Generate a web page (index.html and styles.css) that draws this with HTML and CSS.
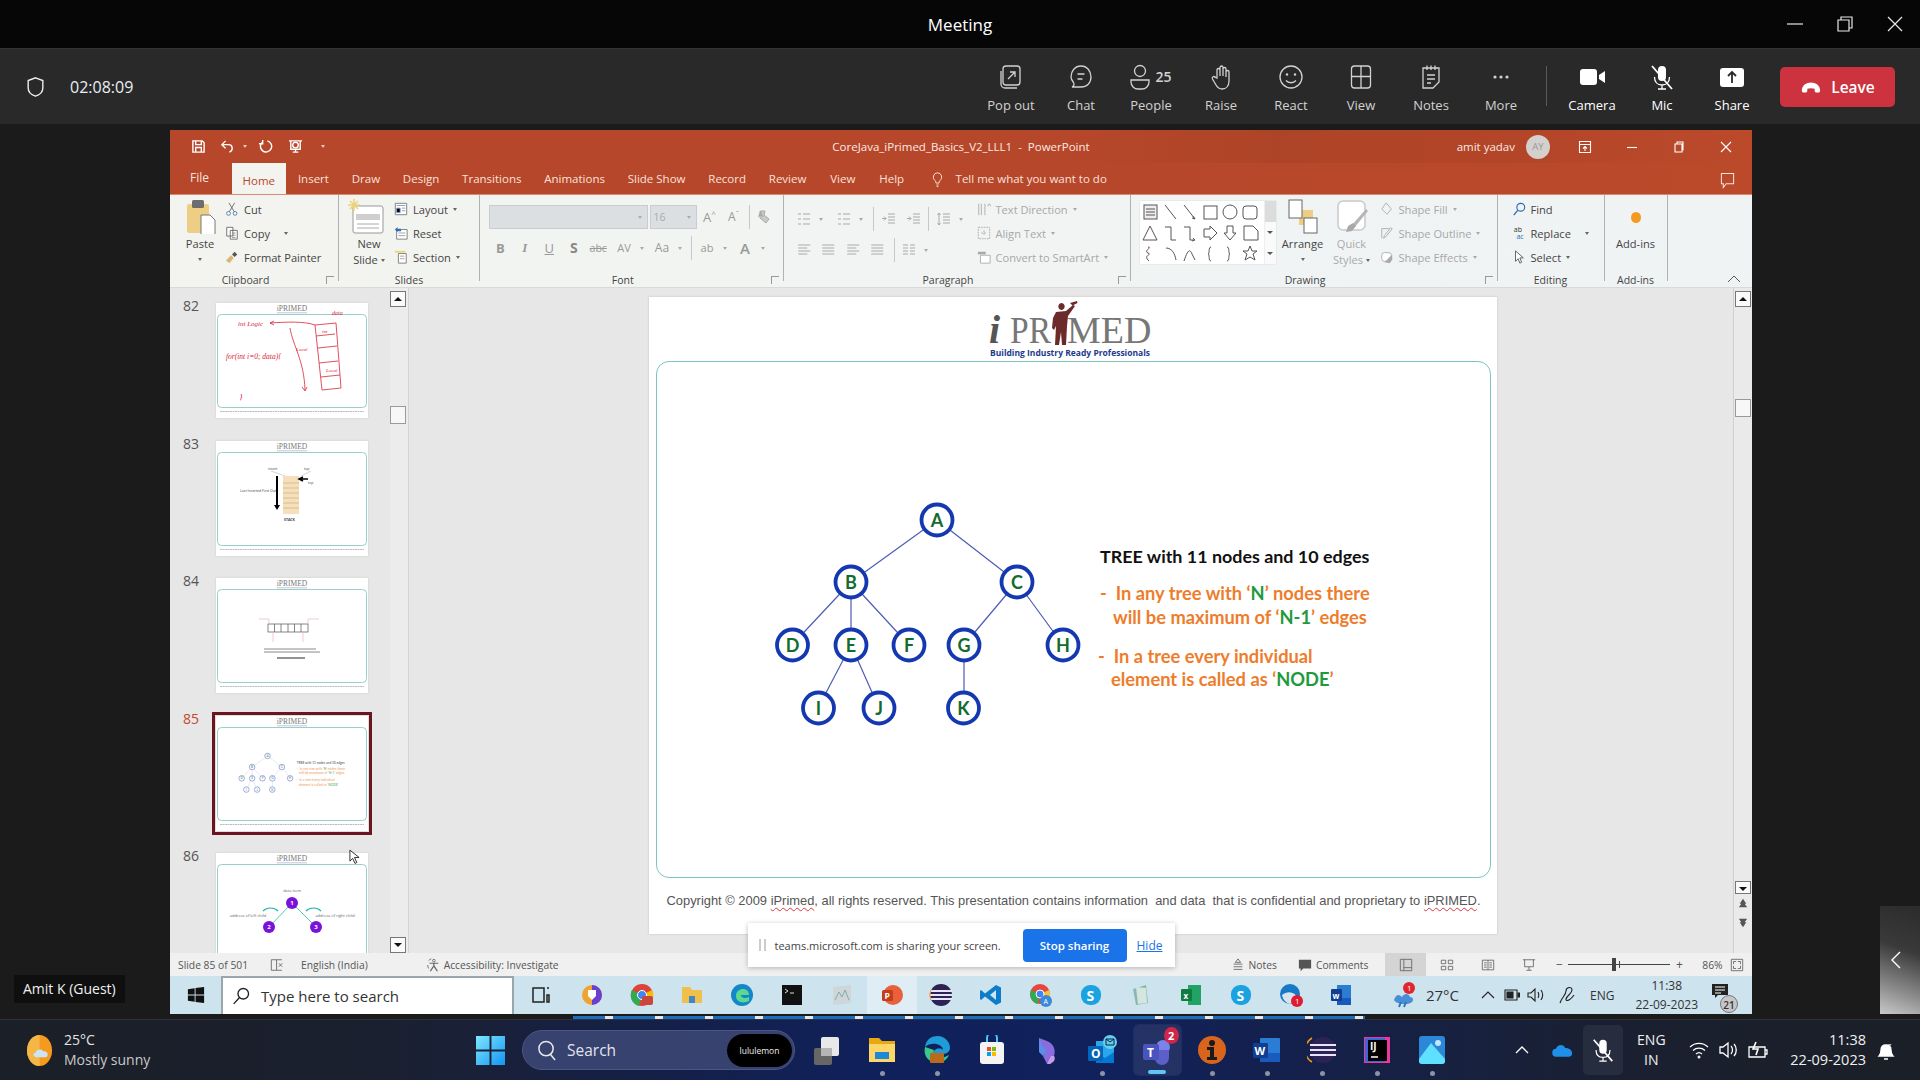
FILE: index.html
```html
<!DOCTYPE html>
<html lang="en">
<head>
<meta charset="utf-8">
<title>Meeting</title>
<link rel="stylesheet" href="styles.css">
</head>
<body>
<svg class="sprite" xmlns="http://www.w3.org/2000/svg">
  <defs>
    <symbol id="t-popout" viewBox="0 0 28 28"><rect x="6" y="3" width="17" height="19" rx="3"/><path d="M4 8v13a4 4 0 0 0 4 4h12"/><path d="M11 16l7-7M13 9h5v5"/></symbol>
    <symbol id="t-chat" viewBox="0 0 28 28"><path d="M14 3c6 0 10 5 10 11s-4 10-10 10h-9c2-1 2.500-3 1.500-4.500C5 17.500 4 16 4 14 4 8 8 3 14 3z"/><path d="M10.500 11h7M10.500 16h5"/></symbol>
    <symbol id="t-people" viewBox="0 0 28 28"><circle cx="14" cy="8" r="5.500"/><path d="M5 17h18v2a7 7 0 0 1-7 7h-4a7 7 0 0 1-7-7z"/></symbol>
    <symbol id="t-hand" viewBox="0 0 28 28"><path d="M10 15V7a1.500 1.500 0 0 1 3 0v6V4.500a1.500 1.500 0 0 1 3 0V13V6a1.500 1.500 0 0 1 3 0v8V9a1.500 1.500 0 0 1 3 0v9c0 5-3 8-7 8-3 0-4.500-1.500-6-4l-3.500-6c-1-2 1.500-3.500 3-1.500z"/></symbol>
    <symbol id="t-smile" viewBox="0 0 28 28"><circle cx="14" cy="14" r="11"/><circle cx="10" cy="11.500" r="1.200" class="fill"/><circle cx="18" cy="11.500" r="1.200" class="fill"/><path d="M9 17.500c2.500 3 7.500 3 10 0"/></symbol>
    <symbol id="t-view" viewBox="0 0 28 28"><rect x="4.500" y="3" width="19" height="22" rx="3"/><path d="M14 3v22M4.500 13.500h19"/></symbol>
    <symbol id="t-notes" viewBox="0 0 28 28"><path d="M6 5h16v14l-6 6H6z"/><path d="M10 2.500V7M14 2.500V7M18 2.500V7M10 12h8M10 16h8M10 20h4"/></symbol>
    <symbol id="t-mic" viewBox="0 0 28 28"><rect x="10" y="3" width="8" height="15" rx="4" class="fill"/><path d="M6.500 14c0 5 3 8 7.500 8s7.500-3 7.500-8M14 22v4M10 26h8"/><path d="M4 3l20 23" stroke-width="1.800"/></symbol>
    <symbol id="rib-lines" viewBox="0 0 16 16"><path d="M2 3h3M7 3h7M2 8h3M7 8h7M2 13h3M7 13h7"/></symbol>
    <symbol id="rib-indent" viewBox="0 0 16 16"><path d="M7 3h7M7 6h7M7 9h7M7 12h7M5 7.500H1m2-2 2 2-2 2"/></symbol>
    <symbol id="rib-align" viewBox="0 0 16 16"><path d="M2 3h12M2 6h9M2 9h12M2 12h9"/></symbol>
    <symbol id="rib-just" viewBox="0 0 16 16"><path d="M2 3h12M2 6h12M2 9h12M2 12h12"/></symbol>
    <symbol id="rib-cols" viewBox="0 0 16 16"><path d="M2 3h5M9 3h5M2 6h5M9 6h5M2 9h5M9 9h5M2 12h5M9 12h5"/></symbol>
    <symbol id="rib-space" viewBox="0 0 16 16"><path d="M7 3h7M7 6h7M7 9h7M7 12h7M3 2v12M1.500 4 3 2l1.500 2M1.500 12 3 14l1.500-2"/></symbol>
    <g id="thumb-frame">
      <rect x="1.500" y="11.500" width="149" height="93" rx="4" fill="#fff" stroke="#7cc4bd" stroke-width=".8"/>
      <text x="76" y="8" text-anchor="middle" font-family="Liberation Serif" font-size="7.500" fill="#777">iPRIMED</text>
      <path d="M61 9.800h30" stroke="#7d8cc0" stroke-width=".5"/>
      <path d="M4 108.500h144" stroke="#b5b5b5" stroke-width=".9" stroke-dasharray="2 .5"/>
    </g>
  </defs>
</svg>

<div class="app">
  <header class="titlebar">
    <div></div>
    <div class="title">Meeting</div>
    <div class="winctl">
      <svg class="wc" viewBox="0 0 16 16"><path d="M0 8h16"/></svg>
      <svg class="wc" viewBox="0 0 16 16"><path d="M1 4h11v11H1zM4 4V1h11v11h-3"/></svg>
      <svg class="wc" viewBox="0 0 16 16"><path d="M1 1l14 14M15 1L1 15"/></svg>
    </div>
  </header>

  <section class="toolbar">
    <div class="call-info">
      <svg class="shield" viewBox="0 0 20 24"><path d="M10 2l8 3v8c0 4.500-3.500 7.500-8 9-4.500-1.500-8-4.500-8-9V5z"/></svg>
      <span class="timer">02:08:09</span>
    </div>
    <div class="actions">
      <div class="act"><svg class="ti"><use href="#t-popout"/></svg><span>Pop out</span></div>
      <div class="act"><svg class="ti"><use href="#t-chat"/></svg><span>Chat</span></div>
      <div class="act"><div class="ppl"><svg class="ti"><use href="#t-people"/></svg><b>25</b></div><span>People</span></div>
      <div class="act"><svg class="ti"><use href="#t-hand"/></svg><span>Raise</span></div>
      <div class="act"><svg class="ti"><use href="#t-smile"/></svg><span>React</span></div>
      <div class="act"><svg class="ti"><use href="#t-view"/></svg><span>View</span></div>
      <div class="act"><svg class="ti"><use href="#t-notes"/></svg><span>Notes</span></div>
      <div class="act"><svg class="ti" viewBox="0 0 28 28"><circle cx="8" cy="14" r="1.600" class="fill"/><circle cx="14" cy="14" r="1.600" class="fill"/><circle cx="20" cy="14" r="1.600" class="fill"/></svg><span>More</span></div>
      <div class="divider"></div>
      <div class="act bright"><svg class="ti" viewBox="0 0 28 28"><rect x="2" y="6" width="17" height="16" rx="3" class="fill"/><path d="M21 12l6-4v12l-6-4z" class="fill"/></svg><span>Camera</span></div>
      <div class="act bright"><svg class="ti"><use href="#t-mic"/></svg><span>Mic</span></div>
      <div class="act bright"><svg class="ti" viewBox="0 0 28 28"><rect x="2" y="5" width="24" height="19" rx="3" class="fill"/><path d="M14 20V9M10 13l4-4 4 4" class="cut"/></svg><span>Share</span></div>
      <div class="leave"><svg viewBox="0 0 24 24"><path d="M2 16c0-6 5-9 10-9s10 3 10 9c0 1-1 2-2 2h-2c-1 0-2-1-2-2v-2c-2-1-6-1-8 0v2c0 1-1 2-2 2H4c-1 0-2-1-2-2z"/></svg><span>Leave</span></div>
    </div>
  </section>

  <main class="stage">
    <div class="ppt">
      <div class="ppt-title">
        <div class="qat">
          <svg class="q q-save" viewBox="0 0 16 16"><path d="M2 2h10l2 2v10H2zM5 2v4h6V2M5 14v-5h6v5"/></svg>
          <svg class="q q-undo" viewBox="0 0 16 16"><path d="M6 2L2 6l4 4M2 6h7c3 0 4 2 4 4s-1 3-3 4"/></svg>
          <i class="ch lt"></i>
          <svg class="q q-redo" viewBox="0 0 16 16"><path d="M10 2a6 6 0 1 1-5 1M5 1v4H1"/></svg>
          <svg class="q q-show" viewBox="0 0 16 16"><path d="M1 2h14M3 2v9h10V2M8 11v3M5 14h6"/><circle cx="8" cy="6.500" r="3"/></svg>
          <i class="ch lt qd"></i>
        </div>
        <div class="doc-title">CoreJava_iPrimed_Basics_V2_LLL1&nbsp; - &nbsp;PowerPoint</div>
        <div class="ppt-user">
          <span class="uname">amit yadav</span>
          <span class="avatar">AY</span>
          <svg class="pc pc-a" viewBox="0 0 14 14"><path d="M1.500 1.500h11v11h-11zM1.500 4.500h11M7 11V6.500M5 8.500l2-2 2 2"/></svg>
          <svg class="pc pc-b" viewBox="0 0 14 14"><path d="M2 7.500h10"/></svg>
          <svg class="pc pc-c" viewBox="0 0 14 14"><path d="M3 4h7v8H3zM5 4V2h6v8h-1"/></svg>
          <svg class="pc pc-d" viewBox="0 0 14 14"><path d="M2 2l10 10M12 2L2 12"/></svg>
        </div>
      </div>
      <nav class="tabs">
        <span class="tab tab-file">File</span>
        <span class="tab tab-home">Home</span>
        <span class="tab">Insert</span>
        <span class="tab">Draw</span>
        <span class="tab">Design</span>
        <span class="tab">Transitions</span>
        <span class="tab">Animations</span>
        <span class="tab">Slide Show</span>
        <span class="tab">Record</span>
        <span class="tab">Review</span>
        <span class="tab tab-wide">View</span>
        <span class="tab tab-wide">Help</span>
        <svg class="bulb" viewBox="0 0 14 20"><path d="M7 1.500a5.500 5.500 0 0 0-3 10c.8.700 1 2 1 3h4c0-1 .2-2.300 1-3a5.500 5.500 0 0 0-3-10zM5.500 17h3M6 19h2"/></svg>
        <span class="tell">Tell me what you want to do</span>
        <svg class="comment" viewBox="0 0 16 18"><path d="M1.500 1.500h13v11h-8l-3 4v-4h-2z"/></svg>
      </nav>

      <div class="ribbon">
        <section class="group g-clip">
          <div class="gbody">
            <div class="big b-paste">
              <svg class="bi" viewBox="0 0 34 36">
                <rect x="4" y="6" width="22" height="29" rx="2" fill="#eecd85"/>
                <rect x="9" y="2" width="12" height="8" rx="1.500" fill="#6d6d6d"/>
                <path d="M18 17h9l5 5v15H18z" fill="#fff" stroke="#777"/>
              </svg>
              <span>Paste</span><i class="ch"></i>
            </div>
            <div class="smalls s-clip">
              <div class="sm"><svg class="si" viewBox="0 0 16 16"><circle cx="4" cy="13" r="2.200" stroke="#4b7fb3" fill="none"/><circle cx="11.500" cy="13" r="2.200" stroke="#4b7fb3" fill="none"/><path d="M5 11L11 1M10.500 11L4.500 1" stroke="#666" fill="none"/></svg><span>Cut</span></div>
              <div class="sm"><svg class="si" viewBox="0 0 16 16"><path d="M2 1.500h7v10H2zM6 5h8v10H6z" stroke="#666" fill="#fff"/><path d="M8 8h4M8 10.500h4M8 13h4" stroke="#888"/></svg><span>Copy</span><i class="ch cp"></i></div>
              <div class="sm"><svg class="si" viewBox="0 0 16 16"><path d="M1 12l6-6 3 3-5 6z" fill="#d9b873"/><path d="M8 5l3-3 3 3-3 3z" fill="#555"/></svg><span>Format Painter</span></div>
            </div>
          </div>
          <div class="glabel pr">Clipboard</div>
          <i class="launch"></i>
        </section>

        <section class="group g-slides">
          <div class="gbody">
            <div class="big b-new">
              <svg class="bi" viewBox="0 0 50 36">
                <rect x="9" y="8" width="30" height="27" rx="2" fill="#fff" stroke="#999"/>
                <rect x="12" y="16" width="24" height="6" fill="#cfcfcf"/><path d="M13 26h22M13 30h22" stroke="#aaa"/>
                <path d="M10 1v12M4 7h12M6 3l8 8M14 3l-8 8" stroke="#ecd27a" stroke-width="1.500"/>
              </svg>
              <span>New</span><span class="sl">Slide<i class="ch in"></i></span>
            </div>
            <div class="smalls">
              <div class="sm"><svg class="si" viewBox="0 0 16 16"><path d="M1.500 1.500h13v13h-13z" fill="#fff" stroke="#777"/><path d="M3 4h10M3 7h4v5H3zM9 7h4M9 10h4" stroke="#7a9cc0"/></svg><span>Layout</span><i class="ch in"></i></div>
              <div class="sm"><svg class="si" viewBox="0 0 16 16"><path d="M3 4h12v11H3z" fill="#fff" stroke="#777"/><path d="M5 8h8M5 11h8" stroke="#999"/><path d="M1 4l3-3v2h4v3H4v1z" fill="#2f6fb3"/></svg><span>Reset</span></div>
              <div class="sm"><svg class="si" viewBox="0 0 16 16"><path d="M5 4h9v11H5z" fill="#fff" stroke="#777"/><path d="M1 1h12v2H1z" fill="#ecd27a"/><path d="M7 7h5M7 10h5" stroke="#999"/></svg><span>Section</span><i class="ch in"></i></div>
            </div>
          </div>
          <div class="glabel">Slides</div>
        </section>

        <section class="group g-font">
          <div class="gbody rows">
            <div class="rrow">
              <div class="fbox"><i class="ch fch"></i></div>
              <div class="sbox"><span>16</span><i class="ch fch"></i></div>
              <span class="gl g24 ml1">A<sup>^</sup></span><span class="gl g24 sm13">A<sup>ˇ</sup></span>
              <i class="vsep ml3"></i>
              <svg class="ri g22 ml4" viewBox="0 0 16 16"><path d="M3 2l5 0-1 4 5 4-3 4-6-5z" fill="#c9c9c9"/><text x="1" y="8" font-size="8" fill="#999" stroke="none" font-family="Open Sans">A</text></svg>
            </div>
            <div class="rrow r2">
              <span class="gl g245 bold">B</span><span class="gl g245 ital">I</span><span class="gl g245 und">U</span><span class="gl g245 bold sh">S</span><span class="gl g245 strike">abc</span>
              <span class="gl g24 ml15 sm11">AV</span><i class="ch fch w12"></i>
              <span class="gl g24 ml3 sm12">Aa</span><i class="ch fch w12"></i>
              <i class="vsep ml6"></i>
              <span class="gl g24 ml3 sm11">ab</span><i class="ch fch w12"></i>
              <span class="gl g24 ml3 bigA">A</span><i class="ch fch w12"></i>
            </div>
          </div>
          <div class="glabel pr">Font</div>
          <i class="launch"></i>
        </section>

        <section class="group g-para">
          <div class="gbody">
            <div class="rows para-left">
              <div class="rrow">
                <svg class="ri g24"><use href="#rib-lines"/></svg><i class="ch fch w12"></i>
                <svg class="ri g24 ml5"><use href="#rib-lines"/></svg><i class="ch fch w12"></i>
                <i class="vsep ml6"></i>
                <svg class="ri g24 ml3"><use href="#rib-indent"/></svg>
                <svg class="ri g24 ml1"><use href="#rib-indent"/></svg>
                <i class="vsep ml2"></i>
                <svg class="ri g24 ml3"><use href="#rib-space"/></svg><i class="ch fch w12"></i>
              </div>
              <div class="rrow r2">
                <svg class="ri g245"><use href="#rib-align"/></svg>
                <svg class="ri g245"><use href="#rib-just"/></svg>
                <svg class="ri g245"><use href="#rib-align"/></svg>
                <svg class="ri g245"><use href="#rib-just"/></svg>
                <i class="vsep ml4"></i>
                <svg class="ri g24 ml2"><use href="#rib-cols"/></svg><i class="ch fch w12"></i>
              </div>
            </div>
            <div class="smalls dim s-para">
              <div class="sm"><svg class="si" viewBox="0 0 16 16"><path d="M2 2v13M5 2v13M9 2v13M12 5l2-3 2 3" stroke="#aaa" fill="none"/></svg><span>Text Direction</span><i class="ch in"></i></div>
              <div class="sm"><svg class="si" viewBox="0 0 16 16"><path d="M1.500 1.500h13v13h-13zM5 8h6M8 5v6" stroke="#aaa" fill="none" stroke-dasharray="2 1"/></svg><span>Align Text</span><i class="ch in"></i></div>
              <div class="sm"><svg class="si" viewBox="0 0 16 16"><path d="M4 6h11v9H4z" stroke="#aaa" fill="#fff"/><path d="M1 2h9v3H1z" fill="#aaa"/></svg><span>Convert to SmartArt</span><i class="ch in"></i></div>
            </div>
          </div>
          <div class="glabel pr">Paragraph</div>
          <i class="launch"></i>
        </section>

        <section class="group g-draw">
          <div class="gbody">
            <div class="gallery">
              <svg class="shapes" viewBox="0 0 124 63">
                <g fill="none" stroke="#555" stroke-width="1">
                  <rect x="4" y="4" width="13" height="14" fill="#eee"/><path d="M6 8h9M6 11h9M6 14h9"/>
                  <path d="M25 4l11 14M44 4l11 14M53 15l2 3-3-1"/>
                  <rect x="64" y="5" width="13" height="13"/><circle cx="90" cy="11" r="7"/><rect x="103" y="5" width="14" height="13" rx="3"/>
                  <path d="M10 25l7 14H3zM25 26h6v13h5M44 26h6v13h4M53 37l2 2-3 1M64 28h6v-3l7 7-7 7v-3h-6zM87 25h6v7h3l-6 7-6-7h3zM104 39V25h9l5 5v9z"/>
                  <path d="M8 46c5 0-5 4 0 6s-6 2 1 8M26 47c6 0 9 6 10 12M44 60c4-12 6-12 8-7l3 6M71 46c-3 0-1 7-3 7 2 0 0 7 3 7M87 46c3 0 1 7 3 7-2 0-0 7-3 7M110 45l2 5 5 0-4 3 2 6-5-3-5 3 2-6-4-3 5 0z"/>
                </g>
              </svg>
              <div class="gal-sb"><i class="gb g-up"></i><i class="gb"><b></b></i><i class="gb"><b></b></i></div>
            </div>
            <div class="big b-arr">
              <svg class="bi" viewBox="0 0 34 36"><rect x="13" y="12" width="14" height="15" fill="#eecd85"/><rect x="3" y="2" width="13" height="18" fill="#fff" stroke="#666"/><rect x="18" y="20" width="13" height="15" fill="#fff" stroke="#666"/></svg>
              <span>Arrange</span><i class="ch"></i>
            </div>
            <div class="big b-qs dimb">
              <svg class="bi" viewBox="0 0 34 36"><rect x="3" y="3" width="27" height="29" rx="5" fill="#fff" stroke="#c9c9c9" stroke-width="1.500"/><path d="M19 30l14-17-2-2-14 16z" fill="#b5b5b5"/><path d="M13 28l5-3 3 3-4 5-6 1z" fill="#a9a9a9"/></svg>
              <span>Quick</span><span class="sl">Styles<i class="ch in"></i></span>
            </div>
            <div class="smalls dim s-shape">
              <div class="sm"><svg class="si" viewBox="0 0 16 16"><path d="M7 1l6 7-5 6-6-6z" fill="none" stroke="#aaa"/></svg><span>Shape Fill</span><i class="ch in"></i></div>
              <div class="sm"><svg class="si" viewBox="0 0 16 16"><path d="M2 3h9M2 3v11M14 3l-7 9-3 2 1-3 7-9z" fill="none" stroke="#aaa"/></svg><span>Shape Outline</span><i class="ch in"></i></div>
              <div class="sm"><svg class="si" viewBox="0 0 16 16"><rect x="2" y="3" width="11" height="10" rx="3" fill="#fff" stroke="#aaa"/><path d="M5 14l9-9v6l-3 4z" fill="#aaa"/></svg><span>Shape Effects</span><i class="ch in"></i></div>
            </div>
          </div>
          <div class="glabel pr">Drawing</div>
          <i class="launch"></i>
        </section>

        <section class="group g-edit">
          <div class="gbody">
            <div class="smalls s-edit">
              <div class="sm"><svg class="si" viewBox="0 0 16 16"><circle cx="10" cy="6" r="4.500" fill="none" stroke="#2b6cb0" stroke-width="1.300"/><path d="M6.500 9.500L2 15" stroke="#2b6cb0" stroke-width="1.500"/></svg><span>Find</span></div>
              <div class="sm"><svg class="si" viewBox="0 0 16 16"><text x="2" y="7" font-size="8" fill="#333" font-family="Open Sans">ab</text><text x="5" y="15" font-size="8" fill="#2b6cb0" font-family="Open Sans">ac</text></svg><span>Replace</span><i class="ch in ml8"></i></div>
              <div class="sm"><svg class="si" viewBox="0 0 16 16"><path d="M4 1v12l3-3 2 5 2-1-2-5h4z" fill="#fff" stroke="#555"/></svg><span>Select</span><i class="ch in"></i></div>
            </div>
          </div>
          <div class="glabel">Editing</div>
        </section>

        <section class="group g-add">
          <div class="gbody">
            <div class="big b-add"><div class="addi"><i></i></div><span>Add-ins</span></div>
          </div>
          <div class="glabel">Add-ins</div>
        </section>

        <div class="rib-end"><svg viewBox="0 0 14 8"><path d="M1 7l6-6 6 6"/></svg></div>
      </div>

      <div class="work">
        <aside class="thumbs">
          <div class="trow">
            <span class="tnum">82</span>
            <svg class="thumb" viewBox="0 0 152 115"><use href="#thumb-frame"/>
              <g fill="none" stroke="#d8253b" stroke-width=".8">
                <path d="M99 22l7 65 19-2-5-65z"/><path d="M100 33l19-2M102 45l19-2M103 60l19-2M105 74l19-2"/>
                <path d="M99 22C88 18 70 19 54 20M54 20l4-2M54 20l4 2"/>
                <path d="M74 25c3 18 14 32 15 62M86 84l3 4 2-4"/>
              </g>
              <g font-family="Liberation Serif" font-style="italic" fill="#d8253b">
                <text x="22" y="23" font-size="7">int Logic</text>
                <text x="10" y="56" font-size="7.500">for(int i=0; data){</text>
                <text x="116" y="12" font-size="6">data</text>
                <text x="106" y="30" font-size="5">int</text>
                <text x="110" y="69" font-size="5">Local</text>
                <text x="80" y="48" font-size="5">Local</text>
                <text x="23" y="97" font-size="9">}</text>
              </g>
            </svg>
          </div>
          <div class="trow">
            <span class="tnum">83</span>
            <svg class="thumb" viewBox="0 0 152 115"><use href="#thumb-frame"/>
              <rect x="67" y="35" width="16" height="38" fill="#f6e0bb"/>
              <path d="M67 42h16M67 47h16M67 52h16M67 57h16M67 62h16M67 67h16" stroke="#b89a6a" stroke-width=".5"/>
              <path d="M61 35v31" stroke="#000" stroke-width="2"/><path d="M58 64h6l-3 5z" fill="#000"/>
              <path d="M92 38h-8m3-2l-4 2 4 2" stroke="#000" stroke-width="1.500" fill="none"/>
              <path d="M55 30l14 5M95 30l-10 5" stroke="#aaa" stroke-width=".5"/>
              <g font-family="Open Sans" fill="#444" font-size="3.500"><text x="52" y="29">insert</text><text x="88" y="29">top</text><text x="24" y="51">Last Inserted First Out</text><text x="92" y="43">top</text><text x="68" y="80" font-weight="700">STACK</text></g>
            </svg>
          </div>
          <div class="trow">
            <span class="tnum">84</span>
            <svg class="thumb" viewBox="0 0 152 115"><use href="#thumb-frame"/>
              <g fill="none" stroke="#555" stroke-width=".7"><rect x="52" y="46" width="40" height="8"/><path d="M58.500 46v8M65 46v8M72 46v8M78.500 46v8M85 46v8"/></g>
              <path d="M43 41h10v5M92 46v-5h11M57 55v9M87 55v9" fill="none" stroke="#e8a9b0" stroke-width=".6"/>
              <g stroke="#888" stroke-width="1"><path d="M48 71h52M48 74h56"/></g><path d="M61 80h28" stroke="#555" stroke-width="1.300"/>
            </svg>
          </div>
          <div class="trow sel">
            <span class="tnum">85</span>
            <svg class="thumb" viewBox="0 0 152 115"><use href="#thumb-frame"/>
              <use href="#slide-content" transform="scale(.179) translate(-649 -297)" class="mini"/>
            </svg>
          </div>
          <div class="trow">
            <span class="tnum">86</span>
            <svg class="thumb" viewBox="0 0 152 115"><use href="#thumb-frame"/>
              <path d="M76 50L53 74M76 50l24 24" stroke="#35c3b5" stroke-width=".9"/>
              <path d="M47 58c4-4 11-4 15 0M105 58c-4-4-11-4-15 0" fill="none" stroke="#25b8aa" stroke-width="1.200"/>
              <g font-family="Open Sans" text-anchor="middle"><circle cx="76" cy="50" r="6" fill="#7a12d8"/><circle cx="53" cy="74" r="6" fill="#7a12d8"/><circle cx="100" cy="74" r="6" fill="#7a12d8"/>
                <g fill="#fff" font-size="6" font-weight="700"><text x="76" y="52">1</text><text x="53" y="76">2</text><text x="100" y="76">3</text></g>
                <g fill="#666" font-size="4"><text x="32" y="64">address of left child</text><text x="119" y="64">address of right child</text><text x="76" y="39">data item</text></g>
              </g>
            </svg>
          </div>
        </aside>
        <div class="vscroll vs-l">
          <i class="sb-btn up"></i>
          <i class="sb-thumb t-l"></i>
          <i class="sb-btn dn mt-auto"></i>
        </div>

        <div class="canvas">
          <article class="slide">
            <svg class="slide-art" viewBox="649 297 848 637">
              <g class="logo">
                <text x="989" y="343" class="logo-i">i</text>
                <text x="1010" y="343" class="logo-t" textLength="41" lengthAdjust="spacingAndGlyphs">PR</text>
                <text x="1067" y="343" class="logo-t">MED</text>
                <path class="logo-fig" d="M1056 312l10-1 7-6 2 1-7 10-1 10-1 19h-4l-1-13-2 13h-4l1-19-2 4-2-2 1-10zM1061.500 303a3.200 3.500 0 1 0 .01 0zM1070 303l7-2 .5 2-5 2.500z"/>
                <text x="990" y="356" class="logo-tag" textLength="160" lengthAdjust="spacingAndGlyphs">Building Industry Ready Professionals</text>
              </g>
              <g id="slide-content">
                <g class="edges">
                  <path d="M937 520L851 582M937 520L1017 582M851 582L792 645M851 582V645M851 582L909 645M1017 582L964 645M1017 582L1063 645M851 645L818 708M851 645L879 708M964 645V708"/>
                </g>
                <g class="nodes">
                  <circle cx="937" cy="520" r="15.500"/><text x="937" y="526.500">A</text>
                  <circle cx="851" cy="582" r="15.500"/><text x="851" y="588.500">B</text>
                  <circle cx="1017" cy="582" r="15.500"/><text x="1017" y="588.500">C</text>
                  <circle cx="792.500" cy="645" r="15.500"/><text x="792.500" y="651.500">D</text>
                  <circle cx="851" cy="645" r="15.500"/><text x="851" y="651.500">E</text>
                  <circle cx="909" cy="645" r="15.500"/><text x="909" y="651.500">F</text>
                  <circle cx="964" cy="645" r="15.500"/><text x="964" y="651.500">G</text>
                  <circle cx="1063" cy="645" r="15.500"/><text x="1063" y="651.500">H</text>
                  <circle cx="818.500" cy="708" r="15.500"/><text x="818.500" y="714.500">I</text>
                  <circle cx="879" cy="708" r="15.500"/><text x="879" y="714.500">J</text>
                  <circle cx="963.500" cy="708" r="15.500"/><text x="963.500" y="714.500">K</text>
                </g>
                <g class="tree-copy">
                  <text x="1100" y="563" class="t-head">TREE with 11 nodes and 10 edges</text>
                  <text x="1100" y="600" class="t-or">-&#160; In any tree with ‘<tspan class="t-gr">N</tspan>’ nodes there</text>
                  <text x="1113" y="623.500" class="t-or">will be maximum of ‘<tspan class="t-gr">N-1</tspan>’ edges</text>
                  <text x="1098" y="662.500" class="t-or">-&#160; In a tree every individual</text>
                  <text x="1111" y="685.500" class="t-or">element is called as ‘<tspan class="t-gr">NODE</tspan>’</text>
                </g>
              </g>
            </svg>
            <div class="slide-box"></div>
            <p class="copyright">Copyright © 2009 <span class="sp">iPrimed</span>, all rights reserved. This presentation contains information&nbsp; and data&nbsp; that is confidential and proprietary to <span class="sp">iPRIMED</span>.</p>
          </article>
        </div>

        <div class="vscroll vs-r">
          <i class="sb-btn up"></i>
          <i class="sb-thumb t-r"></i>
          <i class="sb-btn dn mt-auto2"></i>
          <svg class="dbl" viewBox="0 0 12 36"><path d="M6 1l4 6H8l3 4H1l3-4H2zM1 25h10l-3 4h2l-4 6-4-6h2z"/></svg>
        </div>
      </div>

      <footer class="status">
        <span class="st-a">Slide 85 of 501</span>
        <svg class="st-i st-sp" viewBox="0 0 16 16"><path d="M1.500 2h6v12h-6zM7.500 2h6M7.500 14h6M10 6l4 4M14 6l-4 4"/></svg>
        <span class="st-l">English (India)</span>
        <svg class="st-i st-acc" viewBox="0 0 16 16"><path d="M3 3a7 7 0 0 1 3-2M2 8a6 6 0 0 0 1 4"/><circle cx="9" cy="3" r="1.500"/><path d="M4 6h10M9 6v3L5 15M9 9l4 6" stroke-width="1.400"/></svg>
        <span>Accessibility: Investigate</span>
        <svg class="st-i st-notes" viewBox="0 0 16 16"><path d="M3 7h10M3 10h10M3 13h10M8 1l3 4H5z"/></svg>
        <span>Notes</span>
        <svg class="st-i st-comm" viewBox="0 0 16 16"><path d="M1 2h14v10H6l-3 3v-3H1z" class="stf"/></svg>
        <span>Comments</span>
        <div class="vbtn on"><svg class="st-i" viewBox="0 0 16 16"><path d="M1.500 1.500h13v13h-13zM5.500 1.500v13M5.500 11h9"/></svg></div>
        <div class="vbtn v2"><svg class="st-i" viewBox="0 0 16 16"><path d="M1.500 2.500h5v4h-5zM9.500 2.500h5v4h-5zM1.500 9.500h5v4h-5zM9.500 9.500h5v4h-5z"/></svg></div>
        <div class="vbtn v3"><svg class="st-i" viewBox="0 0 16 16"><path d="M1.500 2.500h13v11h-13zM8 2.500v11M3.500 5.500h3M3.500 8h3M3.500 10.500h3M9.500 5.500h3M9.500 8h3M9.500 10.500h3"/></svg></div>
        <div class="vbtn v4"><svg class="st-i" viewBox="0 0 16 16"><path d="M1 2h14M3 2v8h10V2M8 10v4M5 14h6"/></svg></div>
        <div class="zoomer">
          <span class="zs">−</span>
          <div class="ztrack"><i class="zthumb"></i><i class="ztick"></i></div>
          <span class="zs">+</span>
        </div>
        <span class="zpct">86%</span>
        <svg class="st-i st-fit" viewBox="0 0 16 16"><path d="M1.500 1.500h13v13h-13zM4 7V4h3M12 9v3H9M9 4h3v3M7 12H4V9"/></svg>
      </footer>

      <div class="inner-task">
        <div class="in-start"><svg viewBox="0 0 20 20"><path d="M1 3.500l7.500-1v7H1zM9.500 2.300L19 1v8.500H9.500zM1 10.500h7.500v7l-7.500-1zM9.500 10.500H19V19l-9.500-1.300z"/></svg></div>
        <div class="in-search"><svg viewBox="0 0 16 16"><circle cx="10" cy="6" r="4.700"/><path d="M6.500 9.500L1.500 15"/></svg><span>Type here to search</span></div>
        <div class="in-apps">
          <div class="ia"><svg viewBox="0 0 24 24"><path d="M3 5h11v14H3zM17 5h2M17 12h2v7h-2z" fill="none" stroke="#222" stroke-width="1.500"/></svg></div>
          <div class="ia"><svg viewBox="0 0 24 24"><circle cx="12" cy="12" r="10" fill="#f0a32f"/><path d="M12 2a10 10 0 0 1 0 20z" fill="#6a3fd0"/><path d="M8 7h8v6l-4 4-4-4z" fill="#fff"/></svg></div>
          <div class="ia"><svg viewBox="0 0 24 24"><circle cx="12" cy="12" r="11" fill="#db4437"/><path d="M12 12L2 7a11 11 0 0 0 7 16z" fill="#34a853"/><path d="M12 12l10-5a11 11 0 0 1-3 14z" fill="#fbbc04"/><circle cx="12" cy="12" r="4.500" fill="#4285f4" stroke="#fff"/><rect x="12" y="13" width="11" height="9" rx="2" fill="#c9473a"/></svg></div>
          <div class="ia"><svg viewBox="0 0 24 24"><path d="M2 4h8l2 3h10v13H2z" fill="#f0c04a"/><rect x="9" y="13" width="6" height="7" fill="#3f88c5"/></svg></div>
          <div class="ia"><svg viewBox="0 0 24 24"><circle cx="12" cy="12" r="11" fill="#1287c9"/><path d="M6 13c0-5 4-7 7-7s6 2 6 6h-8c0 3 4 4 8 2v4c-6 3-13 1-13-5z" fill="#5fd88f"/></svg></div>
          <div class="ia"><svg viewBox="0 0 24 24"><rect x="2" y="2" width="20" height="20" fill="#111"/><path d="M5 6l3 2-3 2M10 10h4" stroke="#ddd" fill="none"/></svg></div>
          <div class="ia"><svg viewBox="0 0 24 24"><path d="M3 4l18-2v18L3 22z" fill="#cfd6da"/><path d="M5 17l4-8 3 5 3-7 4 10" stroke="#8aa" fill="none"/></svg></div>
          <div class="ia active"><svg viewBox="0 0 24 24"><circle cx="13" cy="12" r="10" fill="#e8613c"/><rect x="2" y="7" width="11" height="11" rx="1.500" fill="#c43e1c"/><text x="4.500" y="16" font-size="8.500" font-weight="700" fill="#fff" font-family="Open Sans">P</text></svg></div>
          <div class="ia"><svg viewBox="0 0 24 24"><circle cx="12" cy="12" r="11" fill="#2c2255"/><path d="M1 8h22M1 12h22M1 16h22" stroke="#e8e4f7" stroke-width="1.800"/><path d="M2 7a11 11 0 0 0 0 10" fill="none" stroke="#f7941e"/></svg></div>
          <div class="ia"><svg viewBox="0 0 24 24"><path d="M17 2l5 2.500v15L17 22 6 13.500 2 17l-1-1v-8l1-1 4 3.500z" fill="#0d7cc9"/><path d="M17 7l-6 5 6 5z" fill="#cfe5ef"/></svg></div>
          <div class="ia"><svg viewBox="0 0 24 24"><circle cx="11" cy="11" r="10" fill="#e8453c"/><path d="M11 11L2 7a10 10 0 0 0 7 14z" fill="#34a853"/><path d="M11 11l9-4a10 10 0 0 1-4 13z" fill="#f5c33b"/><circle cx="11" cy="11" r="4" fill="#4285f4" stroke="#fff"/><circle cx="17" cy="18" r="6" fill="#3b8ad9"/><text x="14.500" y="21" font-size="7" fill="#fff" font-family="Open Sans">A</text></svg></div>
          <div class="ia"><svg viewBox="0 0 24 24"><rect x="2" y="2" width="20" height="20" rx="9" fill="#1aa3e0"/><text x="7.500" y="17.500" font-size="14" font-weight="700" fill="#fff" font-family="Open Sans">S</text></svg></div>
          <div class="ia"><svg viewBox="0 0 24 24"><path d="M4 6l13-4 2 18-12 2z" fill="#8ab8ad"/><path d="M7 4l10 1 1 15-9 1z" fill="#d5e6e0"/></svg></div>
          <div class="ia"><svg viewBox="0 0 24 24"><rect x="9" y="2" width="13" height="20" fill="#21a366"/><rect x="2" y="6" width="11" height="12" rx="1" fill="#107c41"/><text x="4.500" y="15.500" font-size="8" font-weight="700" fill="#fff" font-family="Open Sans">x</text></svg></div>
          <div class="ia"><svg viewBox="0 0 24 24"><rect x="2" y="2" width="20" height="20" rx="9" fill="#1aa3e0"/><text x="7.500" y="17.500" font-size="14" font-weight="700" fill="#fff" font-family="Open Sans">S</text></svg></div>
          <div class="ia"><svg viewBox="0 0 24 24"><circle cx="11" cy="11" r="10" fill="#1679c5"/><path d="M3 12c6-5 13-3 16 3l-8 6c-4-1-7-4-8-9z" fill="#d7e4ee"/><circle cx="18" cy="18" r="6" fill="#e01b2f"/><text x="16" y="21" font-size="8" fill="#fff" font-family="Open Sans">1</text></svg></div>
          <div class="ia"><svg viewBox="0 0 24 24"><rect x="8" y="2" width="14" height="20" fill="#2b7cd3"/><rect x="8" y="15" width="14" height="7" fill="#185abd"/><rect x="2" y="6" width="11" height="12" rx="1" fill="#103f91"/><text x="3.500" y="15.500" font-size="8" font-weight="700" fill="#fff" font-family="Open Sans">w</text></svg></div>
        </div>
        <div class="in-tray">
          <svg class="w-ic" viewBox="0 0 24 26"><path d="M2 18c2-6 5-6 8-3 2-4 7-4 8 0 3 0 4 3 2 5-2 3-16 3-18-2z" fill="#4a8fd6"/><path d="M9 20l-2 5M14 20l-2 5" stroke="#2f74bb" stroke-width="2"/><circle cx="17" cy="6" r="6" fill="#e0252f"/><text x="15" y="9" font-size="8" fill="#fff" font-family="Open Sans">1</text></svg>
          <span class="temp">27°C</span>
          <svg class="tr t1" viewBox="0 0 14 8"><path d="M1 7l6-6 6 6"/></svg>
          <svg class="tr t2" viewBox="0 0 16 12"><path d="M1 1h12v10H1z"/><path d="M3 3h6v6H3z" fill="#222"/><path d="M14 4h1.500v4H14z" fill="#222"/></svg>
          <svg class="tr t3" viewBox="0 0 18 14"><path d="M1 5h3l4-4v12L4 9H1zM11 4c1 2 1 4 0 6M14 2c2 3 2 7 0 10"/></svg>
          <svg class="tr t4" viewBox="0 0 16 18"><path d="M1 17c2-6 6-8 6-12s6-5 6-1-5 5-6 9c-.5 2 3 3 8-4"/></svg>
          <span class="eng">ENG</span>
          <div class="clock"><span>11:38</span><span>22-09-2023</span></div>
          <div class="notif"><svg viewBox="0 0 18 18"><path d="M1 1h16v11H7l-3 3v-3H1z" fill="#222"/><path d="M4 4h10M4 7h10M4 10h6" stroke="#fff"/></svg><b>21</b></div>
        </div>
      </div>
      <div class="dash"></div>

      <div class="share-pop">
        <i class="grip"></i>
        <span class="share-t">teams.microsoft.com is sharing your screen.</span>
        <button class="stop">Stop sharing</button>
        <a class="hide">Hide</a>
      </div>
      <svg class="cursor" viewBox="0 0 12 17"><path d="M1 1v12l3-3 2.500 5.500 2-1L6 9h5z"/></svg>
    </div>

    <div class="name-tag">Amit K (Guest)</div>
    <div class="side-peek"><svg viewBox="0 0 10 18"><path d="M9 1L1 9l8 8"/></svg></div>
  </main>

  <footer class="taskbar">
    <div class="wx">
      <svg viewBox="0 0 28 34"><ellipse cx="13" cy="17" rx="13" ry="16" fill="#f39a1f"/><path d="M13 1a13 16 0 0 0 0 32z" fill="#f4b646"/><path d="M10 24c-4 0-4-5-1-5 1-4 7-4 8-1 5-1 6 6 2 6z" fill="#cfe3f7"/></svg>
      <div class="wx-t"><span>25°C</span><span>Mostly sunny</span></div>
    </div>
    <div class="center">
      <svg class="win11" viewBox="0 0 30 30"><defs><linearGradient id="wg" x1="0" y1="0" x2="1" y2="1"><stop offset="0" stop-color="#7fe6ff"/><stop offset="1" stop-color="#1296f3"/></linearGradient></defs><path d="M0 0h14v14H0zM16 0h14v14H16zM0 16h14v14H0zM16 16h14v14H16z" fill="url(#wg)"/></svg>
      <div class="pill">
        <svg viewBox="0 0 20 22"><circle cx="9.500" cy="9" r="7.500"/><path d="M14 15l5 6"/></svg>
        <span class="pill-t">Search</span>
        <span class="lulu">lululemon</span>
      </div>
      <div class="apps">
        <div class="app-b"><svg viewBox="0 0 30 30"><rect x="9" y="2" width="18" height="19" rx="2" fill="#e8e8e8"/><rect x="2" y="13" width="18" height="17" rx="2" fill="#666"/><rect x="9" y="13" width="11" height="8" fill="#b5b5b5"/></svg></div>
        <div class="app-b dot"><svg viewBox="0 0 30 30"><path d="M2 3h10l3 3h13v21H2z" fill="#e8a813"/><path d="M2 9h26v18H2z" fill="#fcd768"/><rect x="8" y="17" width="14" height="7" fill="#1e88d8"/></svg></div>
        <div class="app-b dot"><svg viewBox="0 0 30 30"><path d="M3 12C4 4 10 1 16 1s12 5 12 12c0 3-3 6-7 6H11c0-5 7-7 10-4 0-6-12-9-18-3z" fill="#1f9bd8"/><path d="M3 12c-2 8 3 15 11 16 6 0 11-3 13-8-8 5-18 2-15-5z" fill="#36c98d"/><rect x="8" y="18" width="14" height="10" rx="1" fill="#b96a1c"/></svg></div>
        <div class="app-b"><svg viewBox="0 0 30 30"><path d="M10 7V3a5 5 0 0 1 10 0v4" fill="none" stroke="#4fc3f7" stroke-width="2"/><rect x="3" y="7" width="24" height="22" rx="3" fill="#f4f4f4"/><path d="M10 12h4v4h-4z" fill="#f25022"/><path d="M15 12h4v4h-4z" fill="#7fba00"/><path d="M10 17h4v4h-4z" fill="#00a4ef"/><path d="M15 17h4v4h-4z" fill="#ffb900"/></svg></div>
        <div class="app-b"><svg viewBox="0 0 30 30"><path d="M7 3l8 3c7 3 9 9 7 15l-7 8-4-8 3-6-7-4z" fill="#8a6be0"/><path d="M22 21c2 3 0 6-4 8l-3 0 4-8z" fill="#c79be8"/><path d="M7 3v14l4 4 4-6-4-3z" fill="#5c8de8"/></svg></div>
        <div class="app-b dot"><svg viewBox="0 0 30 30"><rect x="9" y="6" width="18" height="22" fill="#28a8ea"/><path d="M9 17l9 6 9-6v11H9z" fill="#0078d4"/><rect x="1" y="11" width="15" height="15" rx="1" fill="#0364b8"/><text x="4" y="23" font-size="12" fill="#fff" font-weight="700" font-family="Open Sans">O</text><circle cx="23" cy="7" r="7" fill="#62d0f5"/><path d="M19 4h8v6h-8zM19 4l4 3 4-3" fill="none" stroke="#123" stroke-width="1"/></svg></div>
        <div class="app-b act-b"><svg viewBox="0 0 30 30"><circle cx="21" cy="12" r="7" fill="#7b83eb"/><path d="M10 15h17v8a7 7 0 0 1-14 0z" fill="#5b5fc7"/><rect x="1" y="9" width="16" height="16" rx="2" fill="#4b53bc"/><text x="5" y="22" font-size="12" fill="#fff" font-weight="700" font-family="Open Sans">T</text></svg><b class="badge">2</b></div>
        <div class="app-b dot"><svg viewBox="0 0 30 30"><circle cx="15" cy="15" r="14" fill="#d9641c"/><circle cx="15" cy="8" r="3" fill="#1a1a1a"/><path d="M10 12h7v10h3v3H10v-3h3v-7h-3z" fill="#1a1a1a"/></svg></div>
        <div class="app-b dot"><svg viewBox="0 0 30 30"><rect x="8" y="3" width="20" height="24" rx="1" fill="#2b7cd3"/><rect x="8" y="18" width="20" height="9" fill="#185abd"/><rect x="1" y="8" width="15" height="15" rx="1" fill="#103f91"/><text x="2.500" y="20" font-size="11" fill="#fff" font-weight="700" font-family="Open Sans">W</text></svg></div>
        <div class="app-b dot"><svg viewBox="0 0 30 30"><circle cx="16" cy="15" r="13" fill="#2c2255"/><path d="M3 10h26M3 15h26M3 20h26" stroke="#e8e4f7" stroke-width="2"/><path d="M5 3a14 14 0 0 0 0 24" fill="none" stroke="#f7941e" stroke-width="1.500"/></svg></div>
        <div class="app-b dot"><svg viewBox="0 0 30 30"><rect x="2" y="2" width="26" height="26" fill="#f0379a"/><rect x="3" y="3" width="20" height="24" fill="#3a66d6"/><rect x="6" y="5" width="19" height="21" fill="#000"/><text x="8" y="15" font-size="10" font-weight="700" fill="#fff" font-family="Open Sans">IJ</text><path d="M9 22h7" stroke="#fff" stroke-width="1.500"/></svg></div>
        <div class="app-b dot"><svg viewBox="0 0 30 30"><rect x="2" y="1" width="26" height="28" rx="3" fill="#2b88d8"/><path d="M2 24l12-16 14 16v2a3 3 0 0 1-3 3H5a3 3 0 0 1-3-3z" fill="#5fe0ff"/><circle cx="21" cy="8" r="3" fill="#bfe9ff"/></svg></div>
      </div>
    </div>
    <div class="sys">
      <svg class="s-chev" viewBox="0 0 14 8"><path d="M1 7l6-6 6 6"/></svg>
      <svg class="s-one" viewBox="0 0 24 16"><path d="M5 15a4.500 4.500 0 0 1-.500-9C6 1 13 0 15 5c4 0 8 2 8 6 0 3-2 4-4 4z" fill="#1f8fe8"/></svg>
      <div class="s-micbox"><svg class="ti"><use href="#t-mic"/></svg></div>
      <div class="s-lang"><span>ENG</span><span>IN</span></div>
      <svg class="s-w" viewBox="0 0 20 18"><path d="M1 6a13 13 0 0 1 18 0M4 9.500a9 9 0 0 1 12 0M7 13a4.500 4.500 0 0 1 6 0"/><circle cx="10" cy="16" r="1.500" class="fill"/></svg>
      <svg class="s-v" viewBox="0 0 20 18"><path d="M1 6h3l5-4v14l-5-4H1zM12 5c2 2 2 6 0 8M15 3c3 3 3 9 0 12"/></svg>
      <svg class="s-b" viewBox="0 0 22 18"><path d="M2 6h16v10H2zM18 9h2v4h-2z"/><path d="M9 1L6 8h5l-2 6" stroke-width="1.600"/></svg>
      <div class="s-clock"><span>11:38</span><span>22-09-2023</span></div>
      <svg class="s-bell" viewBox="0 0 18 22"><path d="M9 6c-3 0-5 2-5 5 0 3-1 5-2 6h14c-1-1-2-3-2-6 0-3-2-5-5-5zM7 20h4" class="fillw"/><text x="11" y="8.500" font-size="7" font-family="Open Sans" fill="#fff" stroke="none">z</text></svg>
    </div>
  </footer>
</div>
</body>
</html>
```

FILE: styles.css
```css
* { box-sizing: border-box; }
html, body { margin: 0; padding: 0; }
body { width: 1920px; height: 1080px; overflow: hidden; background: #1b1b1b; font-family: "Open Sans", "Liberation Sans", sans-serif; color: #fff; }
.sprite { position: absolute; width: 0; height: 0; }
.app { width: 1920px; height: 1080px; display: flex; flex-direction: column; }
i { display: block; font-style: normal; }

/* title bar */
.titlebar { height: 49px; flex: none; background: #060606; border-bottom: 1px solid #333; display: grid; grid-template-columns: 1fr auto 1fr; align-items: center; }
.title { font-size: 17px; color: #fff; }
.winctl { justify-self: end; display: flex; gap: 34px; padding-right: 17px; }
.wc { width: 16px; height: 16px; fill: none; stroke: #e8e8e8; stroke-width: 1.200; }

/* meeting toolbar */
.toolbar { height: 75px; flex: none; background: #292929; display: flex; justify-content: space-between; }
.call-info { display: flex; align-items: center; padding-left: 26px; gap: 25px; }
.shield { width: 19px; height: 22px; fill: none; stroke: #f0f0f0; stroke-width: 1.500; }
.timer { font-size: 16px; color: #e8eef5; }
.actions { display: flex; padding-right: 25px; }
.act { width: 70px; display: flex; flex-direction: column; align-items: center; padding-top: 14px; color: #d2d2d2; font-size: 13px; line-height: 18px; }
.act.bright { color: #fff; }
.ti { width: 28px; height: 28px; margin-bottom: 5px; fill: none; stroke: currentColor; stroke-width: 1.300; flex: none; }
.ti .fill, .fill { fill: currentColor; stroke: none; }
.ti .cut { stroke: #292929; stroke-width: 1.800; fill: none; }
.ppl { display: flex; align-items: flex-start; margin-right: 4px; }
.ppl b { font-size: 14px; line-height: 28px; margin-left: 1px; font-weight: 600; }
.divider { width: 1px; height: 40px; margin: 17px 10px 0 10px; background: #5a5a5a; }
.leave { width: 115px; height: 40px; margin: 18px 0 0 13px; background: #cc333f; border-radius: 5px; display: flex; align-items: center; justify-content: center; gap: 9px; font-size: 15.500px; font-weight: 600; }
.leave svg { width: 22px; height: 22px; fill: #fff; }

/* stage */
.stage { flex: 1; min-height: 0; position: relative; background: #1b1b1b; padding: 6px 168px 0 170px; border-bottom: 1px solid #2f3238; }

/* powerpoint */
.ppt { width: 1582px; position: relative; display: flex; flex-direction: column; color: #444; }
.ppt-title { height: 33px; display: grid; grid-template-columns: 1fr auto 1fr; align-items: center; color: #fff; background: linear-gradient(90deg, #b7472a 0, #b7472a 55%, #ae4427 70%, #b34528 85%, #bb4a2b 100%); }
.qat { display: flex; align-items: center; padding-left: 21px; color: #fff; }
.q { width: 15px; height: 15px; fill: none; stroke: #fff; stroke-width: 1.500; flex: none; }
.q-undo { margin-left: 14px; }
.q-redo { margin-left: 11px; }
.q-show { margin-left: 14.500px; }
.ch { display: inline-block; width: 0; height: 0; border-left: 2.500px solid transparent; border-right: 2.500px solid transparent; border-top: 3px solid #666; }
.ch.lt { border-top-color: #e9c9bf; margin-left: 8px; }
.ch.qd { margin-left: 18.500px; }
.doc-title { font-size: 11.500px; color: #fbe9e4; white-space: nowrap; }
.ppt-user { display: flex; align-items: center; justify-content: flex-end; font-size: 11.500px; }
.avatar { width: 24px; height: 24px; border-radius: 50%; background: #d3d0ce; color: #999; font-size: 9.500px; display: flex; align-items: center; justify-content: center; margin-left: 11px; }
.pc { width: 14px; height: 14px; fill: none; stroke: #fff; stroke-width: 1.100; }
.pc-a { margin-left: 28px; }
.pc-b, .pc-c, .pc-d { margin-left: 33px; }
.pc-d { margin-right: 19px; }
.uname { color: #fbe9e4; }

.tabs { height: 32px; display: flex; align-items: flex-end; background: linear-gradient(90deg, #b7472a 0, #b7472a 60%, #bb4a2b 100%); color: #f7e2dc; font-size: 11.500px; padding-left: 9px; position: relative; border-bottom: 1px solid #d98a72; }
.tab { padding: 0 11.400px; height: 31px; line-height: 31px; white-space: nowrap; }
.tab-wide { padding-left: 12.500px; }
.tab-file { margin-right: 12px; line-height: 29px; padding: 0 11px; font-size: 12px; }
.tab-home { background: #f3f4f0; color: #b7472a; padding: 2px 10.500px 0; margin-right: 1px; }
.bulb { width: 11px; height: 19px; fill: none; stroke: #f7e2dc; stroke-width: 1.200; margin: 0 13px 5px 16px; flex: none; }
.tell { height: 29px; line-height: 28px; }
.comment { width: 15px; height: 17px; fill: none; stroke: #f7e2dc; stroke-width: 1.100; margin: 0 17px 5px auto; }

/* ribbon */
.ribbon { height: 93px; flex: none; display: flex; background: linear-gradient(90deg, #f3f4ef, #f1f4f3 50%, #f0f3f4); border-bottom: 1px solid #d9d9d9; font-size: 11.100px; color: #444; }
.group { position: relative; flex: none; display: flex; flex-direction: column; border-right: 1px solid #aeb2b5; margin-bottom: 6px; }
.gbody { height: 77px; display: flex; flex: none; padding-top: 2px; margin-bottom: -6px; }
.glabel { height: 16px; line-height: 16px; text-align: center; font-size: 10.500px; color: #444; margin-top: 6px; }
.glabel.pr { padding-right: 17px; }
.launch { position: absolute; right: 4px; bottom: -3px; width: 8px; height: 8px; border-left: 1px solid #999; border-bottom: 0; border-top: 1px solid #999; }
.g-clip { width: 169px; }
.g-slides { width: 141px; }
.g-font { width: 303.500px; }
.g-para { width: 347px; }
.g-draw { width: 367px; }
.g-edit { width: 107px; }
.g-add { width: 63px; }
.rib-end { flex: 1; display: flex; justify-content: flex-end; align-items: flex-end; padding: 0 11px 4px 0; }
.rib-end svg { width: 14px; height: 8px; fill: none; stroke: #555; stroke-width: 1; }

.big { display: flex; flex-direction: column; align-items: center; flex: none; line-height: 16px; }
.bi { height: 39px; padding: 1px 0 2px; flex: none; }
.big .ch { margin-top: 6px; }
.big .sl .ch { margin: 0 0 2px 3px; }
.b-paste { width: 34px; margin-left: 13px; }
.b-paste .bi { width: 34px; }
.b-new { width: 50px; margin-left: 5px; }
.b-new .bi { width: 50px; }
.b-arr { width: 44px; margin-left: 5px; }
.b-arr .bi { width: 34px; }
.b-qs { width: 48px; margin-left: 3px; }
.b-qs .bi { width: 34px; }
.dimb { color: #aaa; }
.b-add { width: 62px; }
.addi { height: 39px; display: flex; justify-content: center; padding-top: 15px; }
.addi i { width: 10px; height: 11px; border-radius: 50%; background: #f39a1f; }

.smalls { display: flex; flex-direction: column; flex: none; }
.s-clip { margin-left: 8px; }
.s-para { margin-left: 2px; }
.s-shape { margin-left: 4px; }
.s-edit { margin-left: 14px; }
.dim { color: #a8a8a8; }
.dim .ch { border-top-color: #aaa; }
.sm { height: 24px; display: flex; align-items: center; white-space: nowrap; }
.si { width: 14px; height: 14px; margin-right: 5px; flex: none; }
.ch.in { margin-left: 5px; }
.ch.cp { margin-left: 14px; }
.ml8 { margin-left: 14px !important; }

.rows { display: flex; flex-direction: column; padding-top: 10px; }
.g-font .rows { padding-left: 9px; }
.g-para .para-left { padding-left: 8px; width: 191px; flex: none; }
.rrow { display: flex; align-items: center; height: 24px; color: #8e8e8e; }
.r2 { margin-top: 7px; }
.g-font .r2 { margin-left: -1px; }
.fbox { width: 158.500px; height: 24px; background: #dcdfe2; border: 1px solid #c9cdd1; display: flex; justify-content: flex-end; align-items: center; padding-right: 5px; }
.sbox { width: 47px; height: 24px; margin-left: 2px; background: #dcdfe2; border: 1px solid #c9cdd1; display: flex; justify-content: space-between; align-items: center; padding: 0 5px 0 3px; color: #aaa; font-size: 10.500px; }
.fch { border-top-color: #aaa; flex: none; }
.w12 { border-top: 3px solid #aaa; margin: 0 3.500px; }
.gl { display: block; text-align: center; color: #999; font-size: 13px; line-height: 24px; flex: none; }
.g24 { width: 24px; flex: none; }
.g245 { width: 24.500px; flex: none; }
.g22 { width: 22px; flex: none; }
.gl sup { font-size: 8px; line-height: 0; }
.sm13 { font-size: 12px; }
.sm11 { font-size: 11px; }
.sm12 { font-size: 12px; }
.bold { font-weight: 700; }
.ital { font-style: italic; font-family: "Liberation Serif", serif; font-weight: 700; }
.und { text-decoration: underline; }
.sh { color: #888; font-size: 14px; }
.strike { text-decoration: line-through; font-size: 10.500px; }
.bigA { font-size: 15px; font-weight: 600; }
.vsep { width: 1px; height: 24px; background: #c5c8ca; flex: none; }
.ml1 { margin-left: 1px; }
.ml2 { margin-left: 2px; }
.ml3 { margin-left: 3px; }
.ml4 { margin-left: 4px; }
.ml5 { margin-left: 5px; }
.ml6 { margin-left: 6px; }
.ml15 { margin-left: 1.500px; }
.ri { height: 16px; fill: none; stroke: #a9a9a9; stroke-width: 1; }

.gallery { margin: 4px 0 0 9px; width: 136px; height: 63px; background: #fff; display: flex; box-shadow: 0 0 1px #bbb; flex: none; }
.shapes { width: 124px; height: 63px; flex: none; }
.gal-sb { flex: 1; display: flex; flex-direction: column; border-left: 1px solid #eee; }
.gb { flex: 1; background: #fafafa; display: flex; align-items: center; justify-content: center; }
.gb b { display: block; border-left: 3px solid transparent; border-right: 3px solid transparent; border-top: 3px solid #555; }
.g-up { background: #dcdcdc; }

/* work area */
.work { height: 665px; display: flex; background: #e6e6e6; flex: none; }
.thumbs { width: 220px; height: 665px; overflow: hidden; flex: none; padding-top: 15px; background: #e7e7e7; }
.trow { height: 137.500px; display: flex; position: relative; padding-left: 46px; }
.tnum { position: absolute; left: 13px; top: -7px; font-size: 14px; color: #555; line-height: 20px; }
.thumb { width: 152px; height: 115px; background: #fff; box-shadow: 0 0 2px #c9c9c9; display: block; flex: none; }
.sel .tnum { color: #c4472c; }
.sel .thumb { outline: 3px solid #6a1520; outline-offset: 1px; }
.mini { opacity: .6; }
.vscroll { width: 19px; flex: none; display: flex; flex-direction: column; align-items: center; background: #ececec; padding-top: 3px; }
.vs-l { width: 18px; padding-right: 2px; }
.vs-r { padding-top: 3px; border-left: 1px solid #d0d0d0; background: #eaeaea; }
.sb-btn { width: 16px; height: 16px; background: #fafafa; border: 1px solid #777; position: relative; flex: none; }
.sb-btn::after { content: ""; position: absolute; left: 3px; top: 4.500px; border-left: 4px solid transparent; border-right: 4px solid transparent; }
.up::after { border-bottom: 4px solid #111; }
.dn::after { border-top: 4px solid #111; }
.sb-thumb { width: 16px; height: 18px; background: #f7f7f7; border: 1px solid #999; flex: none; }
.t-l { margin-top: 99px; }
.t-r { margin-top: 92px; }
.mt-auto { margin-top: 513px; }
.mt-auto2 { margin-top: 464px; height: 13px; }
.dbl { width: 10px; height: 30px; margin-top: 4px; fill: #555; }

.canvas { width: 1325px; flex: none; padding: 9px 0 0 240px; border-left: 1px solid #d4d4d4; background: #e7e7e7; }
.slide { width: 848px; height: 637px; background: #fff; position: relative; display: flex; flex-direction: column; align-items: stretch; padding: 64px 6px 0 7px; box-shadow: 0 0 2px #bdbdbd; }
.slide-art { position: absolute; left: 0; top: 0; width: 848px; height: 637px; }
.slide-box { height: 517px; border: 1px solid #7cc4bd; border-radius: 13px; flex: none; }
.copyright { margin: 15px 0 0; line-height: 16px; text-align: center; white-space: nowrap; font-family: "Liberation Sans", Arial, sans-serif; font-size: 12.900px; color: #555; }
.sp { text-decoration: underline wavy #d8383f 1px; text-underline-offset: 2px; }

.logo-i { font: italic 700 40px "Liberation Serif", serif; fill: #555; }
.logo-t { font: 38px "Liberation Serif", serif; fill: #777; }
.logo-fig { fill: #6d2a2a; }
.logo-tag { font: 700 8.500px "Open Sans", sans-serif; fill: #24398c; }
.edges path { stroke: #4f5bb5; stroke-width: 1.200; fill: none; }
.nodes circle { fill: #fff; stroke: #1438b0; stroke-width: 3.800; }
.nodes text { font: 700 18px Lato, sans-serif; fill: #146b2e; text-anchor: middle; }
.t-head { font: 700 17.900px Lato, sans-serif; fill: #111; }
.t-or { font: 700 18.300px Lato, sans-serif; fill: #ee7d2b; }
.t-gr { fill: #22993d; }

/* status bar */
.status { height: 23px; flex: none; display: flex; align-items: center; background: #f0f0f0; font-size: 10.300px; color: #555; padding-left: 8px; white-space: nowrap; }
.st-i { width: 14px; height: 14px; fill: none; stroke: #666; stroke-width: 1; flex: none; }
.stf { fill: #555; stroke: none; }
.st-sp { margin: 0 17px 0 22px; }
.st-l { margin-right: 58px; }
.st-acc { margin-right: 4px; }
.st-notes { margin: 0 4px 0 672px; }
.st-comm { margin: 0 4px 0 21px; }
.vbtn { width: 41px; height: 23px; display: flex; align-items: center; justify-content: center; flex: none; }
.vbtn.on { background: #d4d4d4; margin-left: 17px; }
.zoomer { display: flex; align-items: center; margin-left: 3px; }
.zs { font-size: 12px; width: 14px; text-align: center; }
.ztrack { width: 102px; height: 1px; background: #444; position: relative; margin: 0 2px; }
.zthumb { position: absolute; left: 44px; top: -6px; width: 4px; height: 13px; background: #444; }
.ztick { position: absolute; left: 51px; top: -3px; width: 1px; height: 7px; background: #444; }
.zpct { margin-left: 16px; }
.st-fit { margin-left: 7px; }

/* remote taskbar */
.inner-task { height: 38px; flex: none; display: flex; align-items: center; background: #cde3ee; color: #333; }
.in-start { width: 51px; height: 38px; display: flex; align-items: center; justify-content: center; padding-left: 1px; }
.in-start svg { width: 18px; height: 18px; fill: #111; }
.in-search { width: 293px; height: 38px; background: #fff; border: 2px solid #9aa6ac; border-bottom: 0; display: flex; align-items: center; padding-left: 9px; font-size: 15px; gap: 11px; color: #333; }
.in-search svg { width: 18px; height: 18px; fill: none; stroke: #222; stroke-width: 1.200; }
.in-apps { display: flex; margin-left: 3px; }
.ia { width: 49.950px; height: 38px; display: flex; align-items: center; justify-content: center; flex: none; }
.ia svg { width: 24px; height: 24px; }
.ia.active { background: #deeef4; }
.in-tray { display: flex; align-items: center; margin-left: 26px; flex: 1; font-size: 13px; color: #333; }
.w-ic { width: 24px; height: 26px; flex: none; }
.temp { font-size: 15px; margin-left: 10px; }
.tr { fill: none; stroke: #222; stroke-width: 1.100; flex: none; }
.t1 { width: 14px; height: 8px; margin-left: 22px; }
.t2 { width: 16px; height: 12px; margin-left: 9px; }
.t3 { width: 18px; height: 14px; margin-left: 7px; }
.t4 { width: 16px; height: 18px; margin-left: 14px; }
.eng { font-size: 12px; margin-left: 15px; }
.clock { display: flex; flex-direction: column; align-items: center; font-size: 12px; line-height: 19px; margin-left: 21px; }
.notif { position: relative; width: 24px; height: 24px; margin-left: 13px; }
.notif svg { width: 18px; height: 18px; }
.notif b { position: absolute; right: -3px; bottom: -6px; width: 18px; height: 18px; border-radius: 50%; background: #c7c7c7; font-size: 10px; font-weight: 600; text-align: center; line-height: 18px; border: 1px solid #777; }
.dash { height: 3px; flex: none; background: repeating-linear-gradient(90deg, #1a6ec2 0 32px, #e8e8e8 32px 40px, #1a6ec2 40px 50px); margin: 2px 387px 0 403px; }

/* share popup */
.share-pop { position: absolute; left: 577.500px; top: 793px; width: 427px; height: 44px; background: #fff; box-shadow: 0 1px 5px rgba(0,0,0,.25); display: flex; align-items: center; padding-left: 11px; color: #444; font-size: 11px; white-space: nowrap; }
.grip { width: 7px; height: 12px; border-left: 2px solid #ccc; border-right: 2px solid #ccc; margin-right: 9px; flex: none; }
.share-t { width: 238px; flex: none; }
.stop { width: 104px; height: 33px; margin-left: 10px; background: #1a73e8; color: #fff; border: 0; border-radius: 4px; font: 600 11.500px "Open Sans", sans-serif; padding: 0; flex: none; }
.hide { margin-left: 10px; color: #1a73e8; text-decoration: underline; font-size: 12px; }
.cursor { position: absolute; left: 179px; top: 719px; width: 11px; height: 16px; fill: #fff; stroke: #222; stroke-width: 1; }

.name-tag { position: absolute; left: 14px; top: 851px; padding: 0 9px; height: 28px; line-height: 28px; background: #0f0f0f; color: #f0f0f0; font-size: 14px; }
.side-peek { position: absolute; left: 1880px; top: 782px; width: 40px; height: 108px; background: linear-gradient(200deg, #2b2b2b 0, #3a3a3a 40%, #8a8a8a 75%, #c9c9c9 100%); display: flex; align-items: center; justify-content: center; padding-right: 9px; }
.side-peek svg { width: 10px; height: 18px; fill: none; stroke: #fff; stroke-width: 1.400; }

/* windows taskbar */
.taskbar { height: 60px; flex: none; display: flex; align-items: center; background: linear-gradient(90deg, #1b1f27 0, #1b2030 20%, #10205a 45%, #11215b 58%, #1a2030 85%, #1b1f27 100%); position: relative; }
.wx { display: flex; align-items: center; width: 480px; padding-left: 27px; gap: 10px; flex: none; }
.wx svg { width: 27px; height: 33px; flex: none; }
.wx-t { display: flex; flex-direction: column; font-size: 14px; line-height: 20px; color: #e4e4e4; }
.wx-t span:last-child { color: #c9c9c9; }
.center { display: flex; align-items: center; flex: none; }
.win11 { width: 29px; height: 29px; margin-left: -4px; flex: none; }
.pill { width: 273px; height: 40px; margin-left: 17px; border-radius: 20px; background: #37426f; border: 1px solid #4a5585; display: flex; align-items: center; padding-left: 14px; color: #e2e4ee; font-size: 15.500px; flex: none; }
.pill svg { width: 19px; height: 21px; fill: none; stroke: #e8e8e8; stroke-width: 1.600; flex: none; }
.pill-t { margin-left: 11px; }
.lulu { width: 65px; height: 33px; margin-left: auto; margin-right: 2px; border-radius: 17px; background: #000; color: #eee; font-size: 8.500px; display: flex; align-items: center; justify-content: center; }
.apps { display: flex; margin-left: 4px; }
.app-b { width: 55.100px; height: 50px; display: flex; align-items: center; justify-content: center; position: relative; flex: none; }
.app-b svg { width: 30px; height: 30px; }
.dot::after { content: ""; position: absolute; left: 50%; bottom: -1px; width: 5px; height: 5px; margin-left: -2px; border-radius: 50%; background: #8d93a5; }
.act-b { background: rgba(255,255,255,.08); border-radius: 5px; width: 47px; margin: 0 4px; box-shadow: 0 0 0 1px rgba(255,255,255,.06); }
.act-b::after { content: ""; position: absolute; left: 50%; bottom: 1px; width: 18px; height: 4px; margin-left: -9px; border-radius: 2px; background: #5ec5f5; }
.badge { position: absolute; right: 2px; top: 2px; width: 15px; height: 17px; border-radius: 50%; background: #d1264a; font-size: 11px; text-align: center; line-height: 17px; }
.sys { display: flex; align-items: center; flex: 1; justify-content: flex-end; padding-right: 25px; color: #f0f0f0; min-width: 0; }
.sys svg { fill: none; stroke: #fff; stroke-width: 1.300; flex: none; }
.s-chev { width: 14px; height: 8px; margin-right: 23px; }
.sys .s-one { width: 21px; height: 15px; stroke: none; margin-right: 10px; }
.s-micbox { width: 40px; height: 50px; border-radius: 5px; background: rgba(255,255,255,.06); display: flex; align-items: center; justify-content: center; color: #fff; flex: none; }
.s-micbox .ti { margin: 0; width: 26px; height: 26px; }
.s-lang { display: flex; flex-direction: column; align-items: center; width: 36px; margin-left: 10px; font-size: 14px; line-height: 20px; flex: none; }
.s-w { width: 20px; height: 18px; margin-left: 20px; }
.s-v { width: 20px; height: 18px; margin-left: 10px; }
.s-b { width: 22px; height: 18px; margin-left: 8px; }
.s-clock { display: flex; flex-direction: column; align-items: flex-end; font-size: 14.500px; line-height: 20px; margin-left: 21px; flex: none; }
.s-bell { width: 18px; height: 22px; margin-left: 11px; }
.s-bell .fillw { fill: #fff; stroke: #fff; }
```
